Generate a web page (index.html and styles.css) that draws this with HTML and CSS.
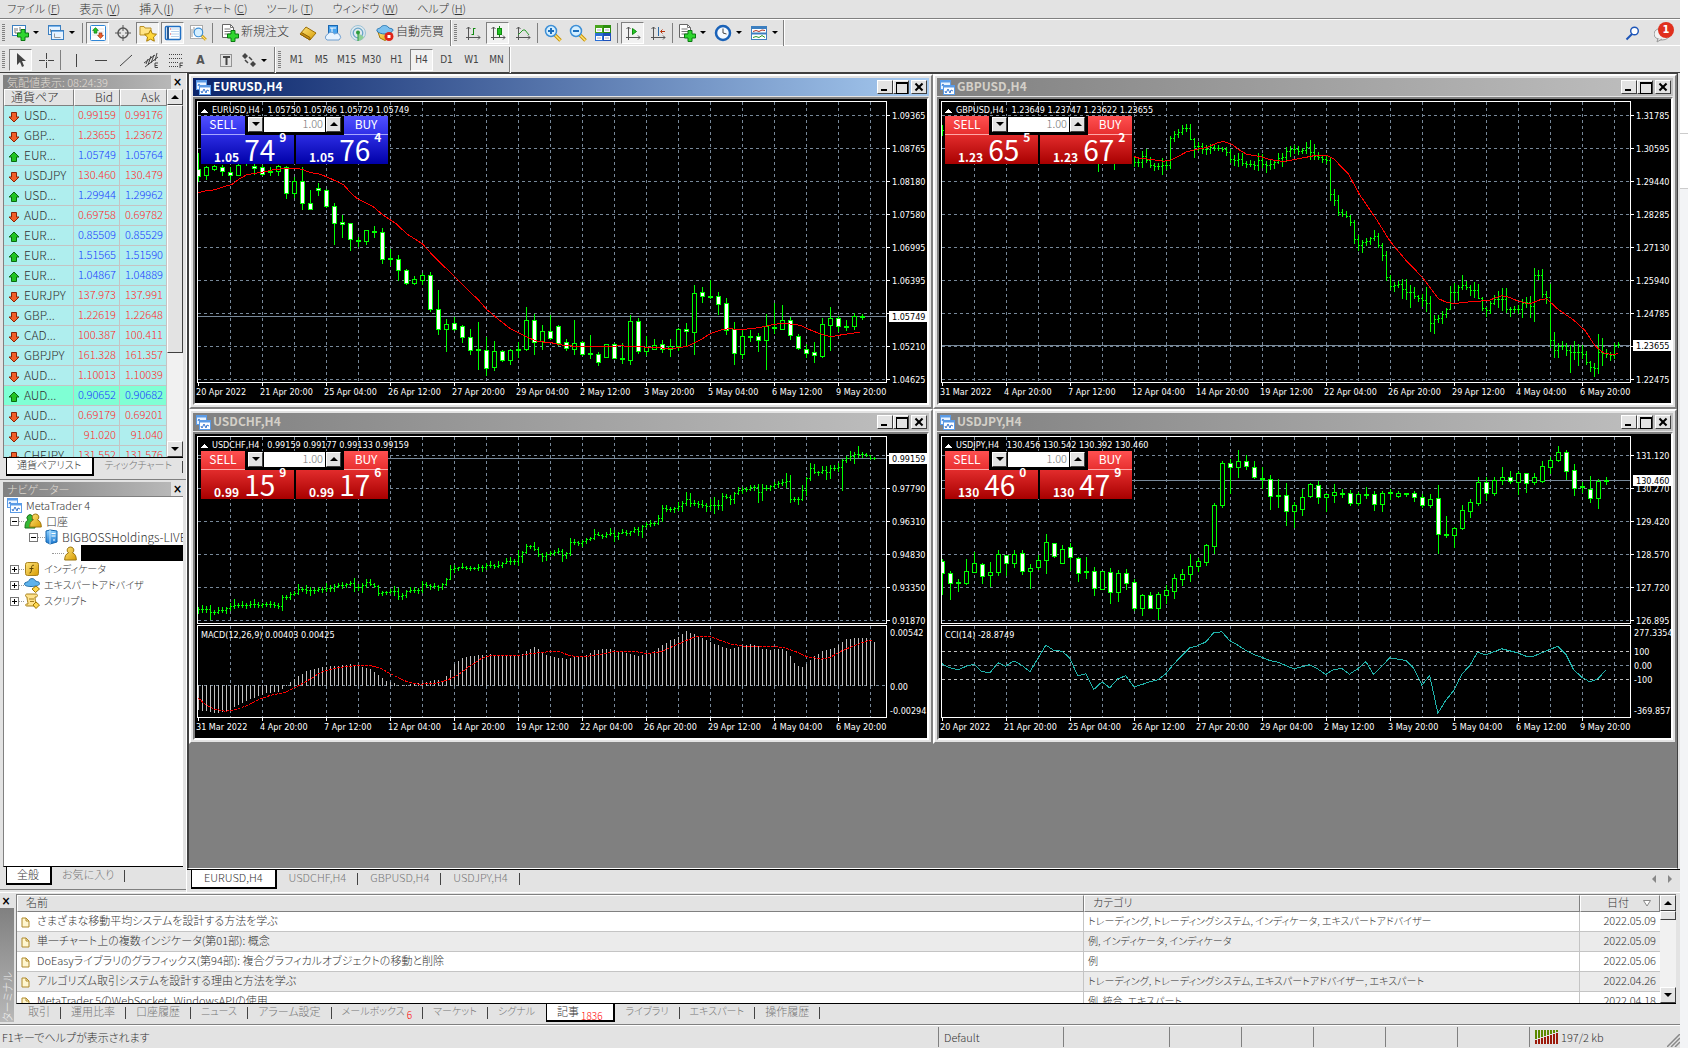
FILE: index.html
```html
<!DOCTYPE html>
<html lang="ja">
<head>
<meta charset="utf-8">
<title>MetaTrader 4</title>
<link rel="stylesheet" href="styles.css">
</head>
<body>
<svg class="defs" aria-hidden="true">
  <defs>
    <linearGradient id="gGold" x1="0" y1="0" x2="1" y2="1"><stop offset="0" stop-color="#ffe680"/><stop offset="1" stop-color="#d79b00"/></linearGradient>
    <linearGradient id="gBlue" x1="0" y1="0" x2="0" y2="1"><stop offset="0" stop-color="#8fd3ff"/><stop offset="1" stop-color="#1c78d0"/></linearGradient>
    <symbol id="up" viewBox="0 0 12 12"><path d="M6 1 11 6H8.500V10.500H3.500V6H1Z" fill="#22c322" stroke="#0a6a12"/></symbol>
    <symbol id="down" viewBox="0 0 12 12"><path d="M6 11 11 6H8.500V1.500H3.500V6H1Z" fill="#f0602a" stroke="#8c2409"/></symbol>
    <symbol id="plus" viewBox="0 0 12 12"><path d="M4 .5h4V4h3.500v4H8v3.500H4V8H.5V4H4Z" fill="#2fd62f" stroke="#0b7a12"/></symbol>
    <symbol id="mt" viewBox="0 0 15 15"><rect x=".5" y=".5" width="10" height="9" fill="#e8f3ff" stroke="#5a9be6"/><path d="M.5 1.500h10" stroke="#5a9be6" stroke-width="2"/><path d="M2 6l1-2 1 3 1-2 1 2" fill="none" stroke="#3a78cf"/><rect x="3.500" y="5.500" width="11" height="9" fill="#fff" stroke="#5a9be6"/><path d="M3.500 6.500h11" stroke="#5a9be6" stroke-width="2"/><path d="M5 11l1 2 2-4 2 4 1-3 2 1" fill="none" stroke="#3a78cf"/></symbol>
    <symbol id="doc" viewBox="0 0 9 11"><path d="M1 1h4l3 3v6H1Z" fill="#fff6cf" stroke="#b08a2c"/><path d="M5 1v3h3" fill="none" stroke="#b08a2c"/></symbol>
    <symbol id="person" viewBox="0 0 13 15"><path d="M6.500 1a3.200 3.200 0 0 1 2 5.800C11 8 12.300 10 12.300 14H.7C.7 10 2 8 4.500 6.800A3.200 3.200 0 0 1 6.500 1Z" fill="url(#gGold)" stroke="#9a7410"/></symbol>
    <symbol id="axes" viewBox="0 0 16 16"><path d="M3.500 15V2M1 12.500h14M1.500 4l2-2 2 2M13 10.500l2 2-2 2" fill="none" stroke="#555"/></symbol>
    <symbol id="lens" viewBox="0 0 18 18"><path d="M11 11l5.500 5.500" stroke="#c99400" stroke-width="3.500"/><path d="M11 11l5.500 5.500" stroke="#ffe27a" stroke-width="1.500"/><circle cx="7" cy="7" r="5.500" fill="#d5efff" stroke="#3d8fd6" stroke-width="1.500"/></symbol>
    <symbol id="page" viewBox="0 0 12 14"><path d="M.5.500h8l3 3v10H.5Z" fill="#fff" stroke="#666"/><path d="M8.500.500v3h3M2.500 5h6M2.500 7.500h7M2.500 10h7" fill="none" stroke="#777"/></symbol>
  </defs>
</svg>

<div class="desktop">
<div class="app">

<nav class="menu">
  <a href="#">ファイル (<u>F</u>)</a><a href="#" class="kanji">表示 (<u>V</u>)</a><a href="#" class="kanji">挿入(<u>I</u>)</a><a href="#">チャート (<u>C</u>)</a><a href="#">ツール (<u>T</u>)</a><a href="#">ウィンドウ (<u>W</u>)</a><a href="#">ヘルプ (<u>H</u>)</a>
</nav>

<div class="toolbar upper">
  <i class="grip"></i>
  <button class="tool drop" aria-label="新規チャート"><svg width="18" height="18"><rect x="1.500" y="1.500" width="13" height="10" fill="#fff" stroke="#3c7fc0"/><path d="M4 4v5h8M6 4v3M9 3v4" fill="none" stroke="#777"/><use href="#plus" x="6" y="5" width="12" height="12"/></svg></button>
  <button class="tool drop" aria-label="チャートの組表示"><svg width="18" height="18"><rect x="1.500" y="1.500" width="12" height="9" fill="#e7f3ff" stroke="#3c7fc0"/><path d="M2 2.500h11" stroke="#7ab4ec"/><path d="M3.500 5v3h6" fill="none" stroke="#999"/><rect x="4.500" y="6.500" width="12" height="9" fill="#e7f3ff" stroke="#3c7fc0"/><path d="M5 7.500h11" stroke="#7ab4ec"/><path d="M7.500 9.500v4h6" fill="none" stroke="#999"/></svg></button>
  <i class="sep"></i>
  <button class="tool on" aria-label="気配値表示"><svg width="18" height="18"><rect x="1.500" y="1.500" width="15" height="15" rx="1" fill="#fff" stroke="#2f86d6"/><path d="M3 5h12M3 8h12M3 11h12" stroke="#e4e4e4"/><use href="#up" x="3" y="3" width="7" height="7"/><use href="#down" x="8" y="8" width="7" height="7"/></svg></button>
  <button class="tool" aria-label="データウィンドウ"><svg width="18" height="18"><circle cx="9" cy="9" r="5" fill="none" stroke="#555" stroke-width="1.500"/><path d="M9 1v6M9 11v6M1 9h6M11 9h6" stroke="#555"/></svg></button>
  <button class="tool on" aria-label="ナビゲーター"><svg width="18" height="18"><path d="M1 11V2.500h4l1 1.500h6v7Z" fill="#ffe486" stroke="#bb9026"/><path d="M11.500 6l1.900 3.700 4.100.5-3 2.900.8 4.100-3.800-2-3.800 2 .8-4.100-3-2.900 4.100-.5Z" fill="#ffd83b" stroke="#a97b00"/></svg></button>
  <button class="tool on" aria-label="ターミナル"><svg width="18" height="18"><rect x="1.500" y="2.500" width="15" height="13" rx="1" fill="#fff" stroke="#1f6fc4" stroke-width="1.500"/><path d="M4 3v12" stroke="#28588f" stroke-width="2"/><path d="M7 5h8M7 7.500h8M7 10h8M7 12.500h8" stroke="#b9d3ee"/><path d="M6 5h1M6 10h1" stroke="#e33"/></svg></button>
  <button class="tool" aria-label="ストラテジーテスター"><svg width="18" height="18"><rect x="1.500" y="1.500" width="12" height="13" fill="#fff" stroke="#aaa"/><path d="M3 5v8M5 3v6" stroke="#999"/><use href="#lens" x="4" y="3" width="14" height="14"/></svg></button>
  <i class="sep"></i>
  <button class="tool wide" aria-label="新規注文"><svg width="18" height="18"><use href="#page" x="1" y="0" width="12" height="14"/><use href="#plus" x="6" y="6" width="12" height="12"/></svg><span>新規注文</span></button>
  <button class="tool" aria-label="MetaEditor"><svg width="18" height="18"><path d="M1 10 7 3l10 6-6 7Z" fill="url(#gGold)" stroke="#9a6d07"/><path d="M1 10l10 6v-2.500L2.500 8.500" fill="#c88e12" stroke="#8a6004"/></svg></button>
  <button class="tool" aria-label="VPS"><svg width="18" height="18"><rect x="4.500" y="1.500" width="9" height="9" fill="#49a4ef" stroke="#1a67b0"/><path d="M6 4h6M8 4v5" stroke="#fff"/><path d="M3 16a3 3 0 0 1 .5-5.500 4 4 0 0 1 7-.5A3.300 3.300 0 0 1 15 16Z" fill="#e9f4ff" stroke="#6f9fd0"/></svg></button>
  <button class="tool" aria-label="シグナル"><svg width="18" height="18"><circle cx="9" cy="9" r="7.500" fill="#dfe9ee" stroke="#9cc2d6"/><circle cx="9" cy="9" r="4.800" fill="none" stroke="#6aa5c8" stroke-width="1.300"/><path d="M9 9v8a8 8 0 0 0 6-4Z" fill="#8fcf97"/><path d="M9 9v8" stroke="#2d9c3b"/><circle cx="9" cy="8.500" r="2" fill="#2d9c3b"/></svg></button>
  <button class="tool wide" aria-label="自動売買"><svg width="18" height="18"><path d="M2 8h13l-2 6-4 2.500L4 14Z" fill="url(#gGold)" stroke="#a87a08"/><path d="M1 7C0 4 4 5 5 3s6-2 7 0 5 1 5 3-5 4-8 4-7-1-8-3Z" fill="#7cc1ef" stroke="#2a78b4"/><circle cx="13" cy="12.500" r="4.500" fill="#e02418"/><rect x="11.500" y="11" width="3" height="3" fill="#fff"/></svg><span>自動売買</span></button>
  <i class="edge"></i><i class="grip"></i>
  <button class="tool" aria-label="バーチャート"><svg width="16" height="16"><use href="#axes" width="16" height="16"/><path d="M8.500 3v7M8.500 3.500h2M6.500 9.500h2" stroke="#128a12"/></svg></button>
  <button class="tool on" aria-label="ローソク足"><svg width="16" height="16"><use href="#axes" width="16" height="16"/><path d="M9.500 1v11" stroke="#128a12"/><rect x="7.500" y="3.500" width="4" height="6" fill="#25c325" stroke="#128a12"/></svg></button>
  <button class="tool" aria-label="ラインチャート"><svg width="16" height="16"><use href="#axes" width="16" height="16"/><path d="M3 10l5-5 2 0 4 5" fill="none" stroke="#2a9a2a"/></svg></button>
  <i class="sep"></i>
  <button class="tool" aria-label="拡大"><svg width="18" height="18"><use href="#lens" width="18" height="18"/><path d="M4 7h6M7 4v6" stroke="#1d6fbd" stroke-width="2"/></svg></button>
  <button class="tool" aria-label="縮小"><svg width="18" height="18"><use href="#lens" width="18" height="18"/><path d="M4 7h6" stroke="#1d6fbd" stroke-width="2"/></svg></button>
  <button class="tool" aria-label="整列"><svg width="18" height="18"><rect x="1" y="1" width="8" height="8" fill="#47a51c"/><rect x="9" y="1" width="8" height="8" fill="#2d8f10"/><rect x="1" y="9" width="8" height="8" fill="#2a6fd6"/><rect x="9" y="9" width="8" height="8" fill="#1d50b8"/><path d="M2 4h6v4H2ZM10 4h6v4h-6ZM2 12h6v4H2ZM10 12h6v4h-6Z" fill="#fff"/><path d="M3 6h4M11 6h4M3 14h4M11 14h4" stroke="#aab"/></svg></button>
  <i class="sep"></i>
  <button class="tool on" aria-label="自動スクロール"><svg width="16" height="16"><use href="#axes" width="16" height="16"/><path d="M7.500 3.500v6l4-3Z" fill="#2c2" stroke="#128a12"/></svg></button>
  <button class="tool" aria-label="チャートシフト"><svg width="16" height="16"><use href="#axes" width="16" height="16"/><path d="M8.500 2v9" stroke="#2a6aa8"/><path d="M15 6.500h-4M12.500 4.500l-2 2 2 2" fill="none" stroke="#b8330c"/></svg></button>
  <i class="sep"></i>
  <button class="tool drop" aria-label="インディケータ"><svg width="18" height="18"><use href="#page" x="1" y="0" width="12" height="14"/><use href="#plus" x="6" y="6" width="12" height="12"/></svg></button>
  <button class="tool drop" aria-label="時間足"><svg width="18" height="18"><circle cx="9" cy="9" r="7" fill="#f4f9ff" stroke="#1a62b8" stroke-width="2.500"/><path d="M9 4.500V9l3.500 1" fill="none" stroke="#444"/></svg></button>
  <button class="tool drop" aria-label="テンプレート"><svg width="18" height="18"><rect x="1.500" y="2.500" width="15" height="13" fill="#fff" stroke="#3c7fc0"/><path d="M2 4h14M2 9.500h14" stroke="#3c7fc0" stroke-width="2"/><path d="M3 7.500l3-1 3 1 3-1.500 3 .5" fill="none" stroke="#b03020"/><path d="M3 13.500l3-1 3 1 3-2 3 2" fill="none" stroke="#2a9a2a"/></svg></button>
  <i class="edge"></i>
  <div class="corner">
    <button class="tool" aria-label="検索"><svg width="16" height="16"><path d="M1.500 14.500 7 9" stroke="#1d55b8" stroke-width="2"/><circle cx="9.500" cy="6" r="3.800" fill="#fff" stroke="#1d55b8" stroke-width="1.400"/></svg></button>
    <button class="tool bell" aria-label="通知"><svg width="20" height="20"><ellipse cx="8" cy="11" rx="8" ry="6" fill="#f2f2f2" stroke="#999"/><path d="M4 15l-1 4 5-3" fill="#ddd" stroke="#999"/></svg><b>1</b></button>
  </div>
</div>

<div class="toolbar lower">
  <i class="grip"></i>
  <button class="tool on" aria-label="カーソル"><svg width="16" height="16"><path d="M4 1v12l3-3 2 5 2-1-2-5h4Z" fill="#444"/></svg></button>
  <button class="tool" aria-label="クロスヘア"><svg width="16" height="16"><path d="M8.500 1v6M8.500 10v6M1 8.500h6M10 8.500h6M8 8.500h1" stroke="#444"/></svg></button>
  <i class="sep"></i>
  <button class="tool" aria-label="垂直線"><svg width="16" height="16"><path d="M8.500 2v13" stroke="#444"/></svg></button>
  <button class="tool" aria-label="水平線"><svg width="16" height="16"><path d="M2 8.500h12" stroke="#444"/></svg></button>
  <button class="tool" aria-label="トレンドライン"><svg width="16" height="16"><path d="M2 14 14 3" stroke="#444"/></svg></button>
  <button class="tool" aria-label="チャネル"><svg width="16" height="16"><path d="M1 11 12 3M2 15 15 5M5 13 8 4M8 11 11 3M3 12 5 7M12 9 14 1" stroke="#444"/><path d="M15 11h-3v4.500h3M12 13.500h2.500" fill="none" stroke="#444"/></svg></button>
  <button class="tool" aria-label="フィボナッチ"><svg width="16" height="16"><path d="M1 2.500h14M1 6.500h14M1 10.500h10M1 14.500h10" stroke="#444" stroke-dasharray="1 1"/><path d="M15 11h-3v5M12 13.500h2.500" fill="none" stroke="#444"/></svg></button>
  <button class="tool glyph">A</button>
  <button class="tool" aria-label="ラベル"><svg width="16" height="16"><rect x="2.500" y="2.500" width="11" height="12" fill="none" stroke="#444" stroke-dasharray="1 1"/><path d="M5 5h7M8.500 5v8" stroke="#444" stroke-width="2"/></svg></button>
  <button class="tool drop" aria-label="矢印"><svg width="16" height="16"><path d="M1 4l3-3 3 3-3 3ZM9 12l3-3 3 3-3 3Z" fill="#444"/><path d="M4 8l3 3M8 5l3 3" stroke="#444" stroke-width="1.500"/></svg></button>
  <i class="edge"></i><i class="grip"></i>
  <button class="tool period">M1</button><button class="tool period">M5</button><button class="tool period">M15</button><button class="tool period">M30</button><button class="tool period">H1</button><button class="tool period on">H4</button><button class="tool period">D1</button><button class="tool period">W1</button><button class="tool period">MN</button>
  <i class="edge"></i>
</div>

<main class="work">
  <aside class="side">
    <section class="dock watch">
      <header class="caption"><h2>気配値表示: 08:24:39</h2><button aria-label="閉じる">×</button></header>
      <div class="scrolled">
        <div class="clip">
        <table class="quotes">
          <colgroup><col class="c-sym"><col class="c-bid"><col></colgroup>
          <thead><tr><th>通貨ペア</th><th>Bid</th><th>Ask</th></tr></thead>
          <tbody>
            <tr class="dn"><td><svg><use href="#down"/></svg>USD...</td><td>0.99159</td><td>0.99176</td></tr>
            <tr class="dn"><td><svg><use href="#down"/></svg>GBP...</td><td>1.23655</td><td>1.23672</td></tr>
            <tr class="up"><td><svg><use href="#up"/></svg>EUR...</td><td>1.05749</td><td>1.05764</td></tr>
            <tr class="dn"><td><svg><use href="#down"/></svg>USDJPY</td><td>130.460</td><td>130.479</td></tr>
            <tr class="up"><td><svg><use href="#up"/></svg>USD...</td><td>1.29944</td><td>1.29962</td></tr>
            <tr class="dn"><td><svg><use href="#down"/></svg>AUD...</td><td>0.69758</td><td>0.69782</td></tr>
            <tr class="up"><td><svg><use href="#up"/></svg>EUR...</td><td>0.85509</td><td>0.85529</td></tr>
            <tr class="up"><td><svg><use href="#up"/></svg>EUR...</td><td>1.51565</td><td>1.51590</td></tr>
            <tr class="up"><td><svg><use href="#up"/></svg>EUR...</td><td>1.04867</td><td>1.04889</td></tr>
            <tr class="dn"><td><svg><use href="#down"/></svg>EURJPY</td><td>137.973</td><td>137.991</td></tr>
            <tr class="dn"><td><svg><use href="#down"/></svg>GBP...</td><td>1.22619</td><td>1.22648</td></tr>
            <tr class="dn"><td><svg><use href="#down"/></svg>CAD...</td><td>100.387</td><td>100.411</td></tr>
            <tr class="dn"><td><svg><use href="#down"/></svg>GBPJPY</td><td>161.328</td><td>161.357</td></tr>
            <tr class="dn"><td><svg><use href="#down"/></svg>AUD...</td><td>1.10013</td><td>1.10039</td></tr>
            <tr class="up sel"><td><svg><use href="#up"/></svg>AUD...</td><td>0.90652</td><td>0.90682</td></tr>
            <tr class="dn"><td><svg><use href="#down"/></svg>AUD...</td><td>0.69179</td><td>0.69201</td></tr>
            <tr class="dn"><td><svg><use href="#down"/></svg>AUD...</td><td>91.020</td><td>91.040</td></tr>
            <tr class="dn"><td><svg><use href="#down"/></svg>CHFJPY</td><td>131.552</td><td>131.576</td></tr>
          </tbody>
        </table>
        </div>
        <div class="bar"><button class="arr u" aria-label="上へ"></button><i class="thumb long"></i><i class="track"></i><button class="arr d" aria-label="下へ"></button></div>
      </div>
      <div class="tabs"><button class="tab kana active">通貨ペアリスト</button><button class="tab kana">ティックチャート</button></div>
    </section>

    <section class="dock navi">
      <header class="caption"><h2>ナビゲーター</h2><button aria-label="閉じる">×</button></header>
      <ul class="tree">
        <li class="root"><svg width="15" height="15"><use href="#mt"/></svg>MetaTrader 4</li>
        <li><i class="box minus"></i><i class="dots"></i><svg width="18" height="16"><path d="M1 15c0-5 1-7 3-8a3 3 0 1 1 4 0c2 1 3 3 3 8Z" fill="#35b935" stroke="#197019"/><use href="#person" x="5" y="0" width="13" height="15"/></svg>口座</li>
        <li class="l2"><i class="box minus"></i><i class="dots"></i><svg width="13" height="16"><path d="M1 2l4-1 7 1v11l-7 2-4-2Z" fill="url(#gBlue)" stroke="#1265ae"/><path d="M5 1v14" stroke="#bfe2ff"/><path d="M6.500 4.500h4M6.500 7h4M8 11h2" stroke="#fff"/></svg>BIGBOSSHoldings-LIVE</li>
        <li class="l3"><i class="dots"></i><svg width="13" height="15"><use href="#person"/></svg><span class="mask"></span></li>
        <li class="kana"><i class="box plus"></i><i class="dots"></i><svg width="16" height="15"><rect x="1.500" y=".5" width="13" height="13" rx="2" fill="url(#gGold)" stroke="#a6801c"/><path d="M10 3.500c-2-1-2.500 1-2.500 3S7 11.500 5.500 11M5.500 6.500h4" fill="none" stroke="#5a4200"/></svg>インディケータ</li>
        <li class="kana"><i class="box plus"></i><i class="dots"></i><svg width="16" height="16"><path d="M.5 7C.5 4.500 4 6 5 3.500 5.500 1 10.500 1 11 3.500 12 5 15.500 4 15.500 6.500S10 9.500 7 9.500.5 9 .5 7Z" fill="#5fb2ea" stroke="#256fa8"/><path d="M8 12l4-3 3.500 3-4 3.500Z" fill="#ffd84f" stroke="#9c7400"/></svg>エキスパートアドバイザ</li>
        <li class="kana"><i class="box plus"></i><i class="dots"></i><svg width="16" height="16"><path d="M3 1h9c2 0 2 3 0 3h-1c0 3 1 5 1 7l1 2H3c-2 0-2-2 0-2h1c0-2-1-4-1-7-2 0-2-3 0-3Z" fill="#ffe28a" stroke="#a6801c"/><path d="M5 6h5M6 8.500h4" stroke="#a6801c"/><path d="M9 12l3-3 3.500 3-3.500 3.500Z" fill="#ffd84f" stroke="#9c7400"/></svg>スクリプト</li>
      </ul>
      <div class="tabs"><button class="tab active">全般</button><button class="tab">お気に入り</button></div>
    </section>
  </aside>

  <section class="stage">
    <div class="mdi">
      <article class="win focus">
        <header class="titlebar"><svg width="15" height="15"><use href="#mt"/></svg><h3>EURUSD,H4</h3><span class="ctl"><button class="min" aria-label="最小化"></button><button class="max" aria-label="最大化"></button><button class="cls" aria-label="閉じる"></button></span></header>
        <div class="chart"><svg class="plot" id="eurusd"></svg>
          <div class="trade blue"><div class="tr-top"><button>SELL</button><span class="lot"><button class="arr d" aria-label="減らす"></button><input value="1.00" aria-label="ロット"><button class="arr u" aria-label="増やす"></button></span><button>BUY</button></div>
          <div class="tr-px"><span>1.05<b>74</b><sup>9</sup></span><span>1.05<b>76</b><sup>4</sup></span></div></div>
        </div>
      </article>
      <article class="win">
        <header class="titlebar"><svg width="15" height="15"><use href="#mt"/></svg><h3>GBPUSD,H4</h3><span class="ctl"><button class="min" aria-label="最小化"></button><button class="max" aria-label="最大化"></button><button class="cls" aria-label="閉じる"></button></span></header>
        <div class="chart"><svg class="plot" id="gbpusd"></svg>
          <div class="trade red"><div class="tr-top"><button>SELL</button><span class="lot"><button class="arr d" aria-label="減らす"></button><input value="1.00" aria-label="ロット"><button class="arr u" aria-label="増やす"></button></span><button>BUY</button></div>
          <div class="tr-px"><span>1.23<b>65</b><sup>5</sup></span><span>1.23<b>67</b><sup>2</sup></span></div></div>
        </div>
      </article>
      <article class="win">
        <header class="titlebar"><svg width="15" height="15"><use href="#mt"/></svg><h3>USDCHF,H4</h3><span class="ctl"><button class="min" aria-label="最小化"></button><button class="max" aria-label="最大化"></button><button class="cls" aria-label="閉じる"></button></span></header>
        <div class="chart"><svg class="plot" id="usdchf"></svg>
          <div class="trade red"><div class="tr-top"><button>SELL</button><span class="lot"><button class="arr d" aria-label="減らす"></button><input value="1.00" aria-label="ロット"><button class="arr u" aria-label="増やす"></button></span><button>BUY</button></div>
          <div class="tr-px"><span>0.99<b>15</b><sup>9</sup></span><span>0.99<b>17</b><sup>6</sup></span></div></div>
        </div>
      </article>
      <article class="win">
        <header class="titlebar"><svg width="15" height="15"><use href="#mt"/></svg><h3>USDJPY,H4</h3><span class="ctl"><button class="min" aria-label="最小化"></button><button class="max" aria-label="最大化"></button><button class="cls" aria-label="閉じる"></button></span></header>
        <div class="chart"><svg class="plot" id="usdjpy"></svg>
          <div class="trade red"><div class="tr-top"><button>SELL</button><span class="lot"><button class="arr d" aria-label="減らす"></button><input value="1.00" aria-label="ロット"><button class="arr u" aria-label="増やす"></button></span><button>BUY</button></div>
          <div class="tr-px"><span>130<b>46</b><sup>0</sup></span><span>130<b>47</b><sup>9</sup></span></div></div>
        </div>
      </article>
    </div>
    <div class="tabs charts"><button class="tab active">EURUSD,H4</button><button class="tab">USDCHF,H4</button><button class="tab">GBPUSD,H4</button><button class="tab">USDJPY,H4</button><span class="nudge"><i class="l"></i><i class="r"></i></span></div>
  </section>
</main>

<section class="terminal">
  <div class="spine"><button aria-label="閉じる">×</button><h2>ターミナル</h2></div>
  <div class="term-body">
    <div class="scrolled">
      <div class="clip">
      <table class="articles">
        <colgroup><col><col class="c-cat"><col class="c-date"></colgroup>
        <thead><tr><th>名前</th><th>カテゴリ</th><th>日付<svg class="sort" width="8" height="8"><path d="M.5 1.500h7L4 7Z" fill="#fff" stroke="#888"/></svg></th></tr></thead>
        <tbody>
          <tr><td><svg><use href="#doc"/></svg>さまざまな移動平均システムを設計する方法を学ぶ</td><td>トレーディング, トレーディングシステム, インディケータ, エキスパートアドバイザー</td><td>2022.05.09</td></tr>
          <tr><td><svg><use href="#doc"/></svg>単一チャート上の複数インジケータ(第01部): 概念</td><td>例, インディケータ, インディケータ</td><td>2022.05.09</td></tr>
          <tr><td><svg><use href="#doc"/></svg>DoEasyライブラリのグラフィックス(第94部): 複合グラフィカルオブジェクトの移動と削除</td><td>例</td><td>2022.05.06</td></tr>
          <tr><td><svg><use href="#doc"/></svg>アルゴリズム取引システムを設計する理由と方法を学ぶ</td><td>トレーディング, トレーディングシステム, エキスパートアドバイザー, エキスパート</td><td>2022.04.26</td></tr>
          <tr><td><svg><use href="#doc"/></svg>MetaTrader 5のWebSocket_WindowsAPIの使用</td><td>例, 統合, エキスパート</td><td>2022.04.18</td></tr>
        </tbody>
      </table>
      </div>
      <div class="bar"><button class="arr u" aria-label="上へ"></button><i class="thumb"></i><i class="track"></i><button class="arr d" aria-label="下へ"></button></div>
    </div>
    <div class="tabs"><button class="tab">取引</button><button class="tab">運用比率</button><button class="tab">口座履歴</button><button class="tab kana">ニュース</button><button class="tab">アラーム設定</button><button class="tab kana">メールボックス<sub>6</sub></button><button class="tab kana">マーケット</button><button class="tab kana last">シグナル</button><button class="tab active">記事<sub>1836</sub></button><button class="tab kana">ライブラリ</button><button class="tab kana">エキスパート</button><button class="tab">操作履歴</button></div>
  </div>
</section>

<footer class="status">
  <span class="help">F1キーでヘルプが表示されます</span><span class="s125">Default</span><span class="s106"></span><span class="s72"></span><span class="s72"></span><span class="s72"></span><span class="s72"></span><span class="s72"></span>
  <span class="net"><svg width="24" height="14"><path d="M1 0v9M4 0v8M7 0v7M10 0v6M13 0v5M16 0v4M19 0v3M22 0v2" stroke="#5c8a00" stroke-width="2"/><path d="M1 10v4M4 9v5M7 8v6M10 7v7M13 6v8M16 5v9M19 4v10M22 3v11" stroke="#9c1a0a" stroke-width="2"/></svg>197/2 kb<svg class="size" width="13" height="13"><path d="M0 13 13 0M4 13 13 4M8 13l5-5" stroke="#888" stroke-width="1.500"/></svg></span>
</footer>
</div>
<div class="behind"><i></i><i></i></div>
</div>
<script src="charts.js"></script>
</body>
</html>
```

FILE: styles.css
```css
* { box-sizing: border-box; }
:root {
  --face: #e3e3e3;
  --mid: #808080;
  --dark: #404040;
  --ui: "Noto Sans CJK JP", sans-serif;
  --small: "DejaVu Sans Condensed", "Noto Sans", sans-serif;
}
body { margin: 0; font: 300 11px/16px var(--ui); font-feature-settings: "palt"; color: #333; background: #f3f4f6; }
button, input { font: inherit; color: inherit; font-feature-settings: inherit; padding: 0; margin: 0; border: 0; border-radius: 0; background: none; }
h2, h3, ul { margin: 0; padding: 0; font: inherit; list-style: none; }
i { display: block; flex: none; }
svg { display: block; flex: none; }
.defs { position: absolute; width: 0; height: 0; }
.desktop { display: flex; min-height: 100vh; }
.app { flex: 1; min-width: 0; display: flex; flex-direction: column; background: var(--face); }
.behind { width: 8px; background: #f3f4f6; }
.behind i { height: 134px; background: #fff; border-bottom: 1px solid #ccc; }
.behind i + i { height: 55px; }

/* menu and toolbars */
.menu { display: flex; gap: 19px; height: 19px; padding-left: 7px; border-bottom: 1px solid var(--mid); }
.menu a { color: #333; text-decoration: none; line-height: 17px; white-space: nowrap; }
.menu .kanji { font-size: 12px; }
.toolbar { display: flex; align-items: center; height: 27px; border-bottom: 1px solid #fff; background: var(--face); }
.toolbar.upper { border-top: 1px solid #fff; }
.toolbar.lower { padding-top: 2px; border-bottom: 1px solid var(--dark); }
.grip { width: 3px; height: 18px; margin: 0 3px 0 2px; background: repeating-linear-gradient(#808080 0 1px, #e3e3e3 1px 2px); }
.sep { width: 1px; height: 20px; margin: 0 2px; background: var(--mid); }
.edge { width: 2px; height: 26px; border-left: 1px solid var(--mid); background: #fff; }
.tool { display: flex; flex: none; align-items: center; justify-content: center; width: 23px; height: 22px; margin: 0 1px; border: 1px solid transparent; }
.tool.on { border-color: var(--mid) #fff #fff var(--mid); background: #f1f1f1; }
.tool.drop { width: 34px; justify-content: flex-start; gap: 4px; padding-left: 1px; }
.tool.drop::after { content: ""; border: 3px solid transparent; border-top: 3px solid #000; border-bottom: 0; }
.tool.wide { width: auto; gap: 2px; padding: 0 4px; font-size: 12px; line-height: 16px; }
.tool.wide span { padding-bottom: 3px; }
.tool.period { font: 10px/14px var(--small); color: #444; }
.tool.glyph { font: bold 12px/14px var(--small); color: #555; }
.corner { display: flex; gap: 6px; margin-left: auto; padding-right: 4px; }
.bell { position: relative; }
.bell b { position: absolute; top: -1px; right: 0; width: 16px; height: 16px; border-radius: 8px; background: #e0301e; color: #fff; font: bold 11px/16px var(--small); text-align: center; }

/* docks */
.work { flex: 1; display: flex; min-height: 0; }
.side { flex: none; width: 187px; display: flex; flex-direction: column; border-right: 1px solid #fff; }
.dock { display: flex; flex-direction: column; padding: 2px 3px 0; }
.watch { height: 407px; border-bottom: 1px solid var(--mid); }
.navi { flex: 1; border-bottom: 1px solid var(--mid); margin-bottom: 2px; }
.caption { display: flex; height: 14px; }
.caption h2 { flex: 1; padding-left: 4px; color: #e0dcd4; line-height: 14px; background: linear-gradient(90deg, #808080, #b8b8b8); }
.caption button, .spine button { width: 12px; font: bold 12px/12px var(--small); color: #000; }
.caption button { padding-left: 1px; }
.scrolled { display: flex; flex: none; }
.clip { flex: 1; min-width: 0; overflow: hidden; }
.watch .scrolled { height: 369px; border-left: 1px solid var(--mid); border-bottom: 1px solid #000; }
.bar { flex: none; width: 16px; display: flex; flex-direction: column; }
.arr { flex: none; display: flex; align-items: center; justify-content: center; width: 16px; height: 16px; background: var(--face); border: 1px solid; border-color: #fff var(--dark) var(--dark) #fff; }
.arr::after { content: ""; border: 4px solid transparent; }
.arr.u::after { border-top: 0; border-bottom-color: #000; }
.arr.d::after { border-bottom: 0; border-top-color: #000; }
.thumb { height: 9px; background: var(--face); border: 1px solid; border-color: #fff var(--dark) var(--dark) #fff; }
.thumb.long { height: 248px; }
.track { flex: 1; background: #f1f1f1; }

table { width: 100%; border-collapse: separate; border-spacing: 0; table-layout: fixed; }
th { height: 17px; padding: 0; font-weight: inherit; line-height: 13px; vertical-align: top; background: var(--face); border: 1px solid; border-color: #fff var(--mid) var(--mid) #fff; }
td { height: 20px; padding: 0; line-height: 17px; vertical-align: top; white-space: nowrap; overflow: hidden; border-bottom: 1px solid #c4c4c4; border-right: 1px solid #c4c4c4; }
td svg { display: inline-block; vertical-align: middle; }
.c-sym { width: 70px; }
.c-bid { width: 46px; }
.quotes th { text-align: right; padding-right: 6px; font-size: 12px; }
.quotes th:first-child { text-align: left; padding-left: 6px; }
.quotes td { background: #afeeee; text-align: right; padding-right: 3px; }
.quotes td:first-child { text-align: left; padding-left: 4px; color: #333; font-size: 12px; }
.quotes td svg { width: 12px; height: 12px; margin-right: 4px; }
.quotes .sel td { background: #7fffd4; }
.dn { color: #ff2a2a; }
.up { color: #1a3cff; }

.tabs { display: flex; height: 18px; }
.tab { position: relative; flex: none; height: 16px; padding: 0 11px 2px 10px; color: #777; line-height: 14px; white-space: nowrap; }
.tab::after { content: ""; position: absolute; right: 0; top: 3px; width: 1px; height: 12px; background: #444; }
.tab.active { background: #fff; color: #333; border: 2px solid #000; border-width: 0 2px 2px 1px; height: 18px; margin-left: 3px; }
.tab.active::after, .tab.last::after { display: none; }
.tab sub { color: #f00; font-size: 10px; line-height: 9px; margin-left: 2px; vertical-align: -4px; }
.kana, .tree li.kana { font-size: 10px; }

.tree { flex: 1; background: #fff; border-left: 1px solid var(--mid); border-top: 1px solid var(--mid); border-bottom: 1px solid #000; position: relative; overflow: hidden; }
.tree li { display: flex; align-items: center; height: 16px; padding-left: 6px; white-space: nowrap; line-height: 14px; }
.tree li.root { padding-left: 3px; }
.tree li.l2 { padding-left: 25px; font-size: 12px; }
.tree li.l3 { padding-left: 48px; }
.tree svg { margin-right: 4px; }
.box { width: 9px; height: 9px; border: 1px solid #777; background: linear-gradient(#000, #000) center / 5px 1px no-repeat; }
.box.plus { background: linear-gradient(#000, #000) center / 5px 1px no-repeat, linear-gradient(#000, #000) center / 1px 5px no-repeat; }
.dots { width: 5px; border-top: 1px dotted #999; }
.l2 .dots { width: 7px; }
.l3 .dots { width: 12px; }
.mask { width: 105px; height: 16px; background: #000; }
.navi .tabs { height: 22px; }

/* chart windows */
.stage { flex: 1; min-width: 0; display: flex; flex-direction: column; }
.mdi { flex: 1; display: grid; grid-template-columns: 1fr 1fr; align-content: start; background: var(--mid); border: 0 solid var(--dark); border-width: 1px 1px 0 2px; margin-right: 2px; border-bottom: 1px solid #fff; }
.win { min-width: 0; padding: 2px; background: var(--face); border: 2px solid; border-color: #fff var(--mid) var(--mid) #fff; }
.titlebar { display: flex; align-items: center; height: 18px; margin-bottom: 1px; padding: 0 2px 0 3px; background: linear-gradient(90deg, #808080, #c0c0c0); color: #d4d0c8; }
.focus .titlebar { background: linear-gradient(90deg, #0a246a, #a6caf0); color: #fff; }
.titlebar h3 { flex: 1; padding: 0 0 2px 2px; font: bold 12px/14px var(--ui); }
.ctl { display: flex; }
.ctl button { position: relative; width: 16px; height: 14px; background: var(--face); border: 1px solid; border-color: #fff var(--dark) var(--dark) #fff; }
.ctl .cls { margin-left: 2px; }
.ctl .min::after { content: ""; position: absolute; left: 3px; bottom: 2px; width: 6px; height: 2px; background: #000; }
.ctl .max::after { content: ""; position: absolute; left: 2px; top: 1px; width: 10px; height: 9px; border: 1px solid #000; border-top-width: 2px; }
.ctl .cls::before, .ctl .cls::after { content: ""; position: absolute; left: 2px; top: 5px; width: 10px; height: 2px; background: #000; transform: rotate(45deg); }
.ctl .cls::after { transform: rotate(-45deg); }
.chart { position: relative; background: #000; border: 2px solid; border-color: var(--mid) #fff #fff var(--mid); }
.plot { width: 100%; height: 304px; font: 9px var(--small); fill: #fff; }

.trade { position: absolute; left: 6px; top: 17px; width: 187px; color: #fff; background: #000; }
.tr-top { display: flex; justify-content: space-between; height: 19px; }
.tr-top > button { width: 44px; padding-bottom: 3px; color: #fff; font-weight: 400; font-size: 12px; line-height: 14px; border-bottom: 1px solid rgba(255,255,255,.5); }
.lot { display: flex; gap: 1px; width: 93px; height: 15px; margin-top: 1px; }
.lot input { flex: 1; min-width: 0; background: #fff; color: #777; text-align: right; padding: 0 2px 3px 0; }
.lot .arr { width: 15px; height: 15px; padding-bottom: 1px; }
.tr-px { display: grid; grid-template-columns: 93px 92px; gap: 2px; height: 29px; }
.tr-px span { display: flex; align-items: flex-end; font-weight: 700; font-size: 12px; line-height: 14px; padding-left: 13px; }
.tr-px b { font-weight: 400; font-size: 28px; line-height: 25px; margin: 0 4px 2px 5px; }
.tr-px sup { align-self: flex-start; font-size: 12px; line-height: 9px; margin-top: -3px; }
.blue .tr-top > button { background: linear-gradient(#5050ff, #3030e8); }
.blue .tr-px span { background: linear-gradient(#2c2ce2, #0000a8); }
.red .tr-top > button { background: linear-gradient(#ff5050, #e83030); }
.red .tr-px span { background: linear-gradient(#e22c2c, #a80000); }

.tabs.charts { height: 23px; border-top: 1px solid #000; }
.tabs.charts .tab { height: 18px; padding: 0 12px 4px; }
.tabs.charts .tab.active { height: 19px; margin-left: 4px; padding-bottom: 3px; }
.nudge { display: flex; gap: 12px; align-items: center; margin-left: auto; padding: 0 8px 4px 0; }
.nudge i { border: 4px solid transparent; }
.nudge .l { border-left: 0; border-right-color: #888; }
.nudge .r { border-right: 0; border-left-color: #888; }

/* terminal */
.terminal { display: flex; height: 133px; padding: 1px 4px 0 0; border-top: 1px solid #fff; border-bottom: 1px solid var(--mid); }
.spine { width: 16px; display: flex; flex-direction: column; align-items: flex-start; }
.spine h2 { flex: 1; width: 14px; writing-mode: vertical-rl; text-orientation: sideways; transform: rotate(180deg); color: #eee; line-height: 14px; background: linear-gradient(#b8b8b8, #808080); margin-bottom: 2px; }
.spine button { height: 14px; }
.term-body { flex: 1; min-width: 0; }
.term-body .scrolled { height: 110px; border-top: 1px solid var(--mid); border-left: 1px solid var(--mid); border-bottom: 1px solid #000; }
.c-cat { width: 496px; }
.c-date { width: 80px; }
.articles th { text-align: left; padding-left: 8px; }
.articles th:last-child { text-align: right; padding-right: 8px; }
.articles td { padding-left: 4px; }
.articles td:nth-child(2) { font-size: 10px; }
.articles td:last-child { text-align: right; padding-right: 4px; border-right: 0; }
.articles td svg { width: 9px; height: 11px; margin-right: 7px; }
.articles tbody tr { background: #fff; }
.articles tbody tr:nth-child(even) { background: #ebebeb; }
.sort { display: inline-block; margin-left: 14px; }
.term-body .tabs { padding-left: 2px; }
.term-body .tab { padding-bottom: 3px; }
.term-body .tab.active { margin-left: 0; padding-bottom: 2px; }

/* status bar */
.status { display: flex; align-items: center; height: 23px; border-top: 1px solid #fff; }
.status span { height: 20px; line-height: 21px; padding-left: 5px; border-left: 1px solid var(--mid); }
.status .help { flex: 1; padding-left: 2px; border-left: 0; }
.s125 { width: 125px; }
.s106 { width: 106px; }
.s72 { width: 72px; }
.status .net { display: flex; align-items: center; gap: 2px; width: 151px; }
.size { align-self: flex-end; margin-left: auto; }
```

FILE: charts.js
```js
// Samples are held in fine chart units, three to a pixel vertically.
// Candle: [high, bodyTop, bodyBottom, low, filled]; bar: [high, low].
const eur = [[250,298,318,332,1],[288,290,316,328,0],[286,288,296,300,0],[286,290,304,314,1],[290,306,314,328,1],[280,284,314,314,0],[270,272,280,284,0],[280,288,293,312,1],[284,292,311,314,1],[292,303,307,314,0],[286,289,304,314,0],[288,290,368,384,1],[320,334,368,382,0],[290,334,400,416,1],[360,400,416,416,1],[338,355,360,374,1],[358,361,409,412,1],[400,408,458,522,1],[434,457,462,500,1],[458,460,508,540,1],[500,509,512,528,0],[480,481,514,522,0],[468,482,485,500,0],[474,487,566,578,1],[536,565,568,585,0],[556,568,601,630,1],[596,600,638,641,1],[618,628,638,642,0],[608,615,629,643,0],[605,615,718,724,1],[660,718,776,792,1],[746,763,776,843,0],[742,760,776,780,1],[764,767,802,816,1],[777,801,839,852,1],[755,838,841,897,0],[802,841,893,914,1],[812,843,890,900,0],[840,843,869,872,1],[836,841,869,882,0],[815,838,841,860,0],[710,751,838,840,0],[732,750,815,852,1],[765,784,814,836,0],[735,784,803,808,1],[766,767,818,824,1],[808,817,835,840,1],[750,819,836,852,0],[812,817,851,856,1],[795,849,852,864,0],[845,851,875,884,1],[822,823,860,862,0],[820,823,863,864,1],[818,863,866,879,0],[735,754,869,881,0],[744,754,842,848,1],[797,832,842,856,0],[808,826,836,838,0],[810,823,838,845,1],[808,829,838,858,0],[774,777,829,840,0],[760,777,783,828,1],[645,670,785,852,0],[650,667,677,696,1],[630,677,680,684,0],[666,679,701,732,1],[684,700,779,792,1],[756,777,848,881,1],[780,799,851,864,0],[780,799,802,812,0],[788,799,811,842,1],[732,769,811,896,0],[700,772,775,788,0],[705,751,776,778,0],[742,751,794,808,1],[792,798,835,838,1],[822,837,848,862,1],[815,847,854,876,1],[744,763,857,860,0],[711,745,764,840,0],[738,745,769,784,1],[750,767,770,780,0],[730,739,769,776,0],[732,738,741,748,0]];
const eurMa = [24,367,48,361,75,358,100,349,125,342,150,324,170,313,216,305,250,298,290,293,320,293,340,298,360,306,385,310,408,318,460,342,485,370,504,386,550,409,580,434,620,461,650,490,697,520,730,556,780,605,830,655,865,688,890,717,925,746,960,774,1000,794,1030,808,1045,813,1085,817,1110,823,1150,827,1170,829,1240,829,1290,826,1350,829,1410,832,1440,835,1490,828,1530,809,1560,790,1590,779,1615,775,1660,777,1710,771,1750,762,1780,758,1830,764,1860,778,1890,790,1922,799,1960,792,2010,785];
const gbpHead = [[165,195]];
const gbpBody = [[258,288],[262,288],[242,292],[238,276],[262,290],[280,300],[278,298],[264,311],[274,298],[198,294],[184,212],[178,202],[164,192],[162,184],[162,208],[204,262],[216,240],[218,250],[224,252],[222,250],[222,240],[226,240],[230,242],[232,256],[236,276],[256,284],[250,288],[248,286],[274,292],[270,288],[274,296],[250,300],[252,290],[272,305],[270,298],[272,294],[248,280],[248,288],[230,272],[228,258],[224,248],[228,252],[234,250],[216,248],[210,268],[222,268],[246,268],[254,276],[258,280],[260,390],[356,404],[374,434],[416,438],[424,442],[434,464],[450,520],[496,540],[510,546],[504,524],[500,522],[480,510],[488,532],[520,570],[542,630],[614,658],[636,662],[632,652],[628,684],[626,688],[644,710],[650,684],[674,692],[672,708],[652,722],[678,782],[736,788],[734,756],[722,760],[714,742],[648,718],[640,686],[646,690],[614,658],[632,656],[644,674],[636,680],[642,684],[682,720],[710,738],[694,730],[674,702],[662,710],[654,720],[654,726],[710,738],[708,726],[706,730],[688,740],[682,712],[678,740],[594,752],[600,628],[598,680],[662,698],[642,832],[786,860],[820,862],[812,838],[820,854],[826,905],[814,868],[822,886],[826,864],[842,882],[872,902],[878,918],[792,910],[804,886],[836,860],[846,870],[820,864],[816,830]];
const gbp = gbpHead.concat(Array(47).fill(null), gbpBody);
gbp[39] = [250,303]; gbp[43] = [250,296];
const gbpMa = [612,258,630,264,660,266,700,272,720,270,740,260,770,244,800,236,830,231,860,218,880,213,905,221,930,240,950,251,990,258,1020,267,1060,273,1110,264,1140,258,1160,254,1190,254,1210,264,1255,310,1290,374,1340,448,1380,512,1430,572,1475,618,1525,684,1550,696,1575,699,1620,694,1675,690,1715,676,1740,681,1765,692,1800,700,1830,688,1850,685,1885,717,1930,748,1965,780,1995,826,2020,847,2045,852,2065,850];
const chf = [[590,608],[584,606],[588,605],[586,627],[600,612],[590,610],[592,606],[590,608],[580,600],[566,594],[578,590],[574,592],[578,594],[574,590],[566,590],[576,590],[578,590],[576,588],[574,590],[576,590],[580,594],[554,600],[556,566],[546,566],[544,556],[522,552],[530,544],[524,548],[532,554],[534,548],[530,544],[532,546],[520,542],[526,544],[522,542],[518,532],[516,534],[518,530],[512,526],[504,544],[522,540],[520,546],[508,530],[506,526],[518,530],[524,554],[542,554],[542,552],[538,550],[528,554],[534,568],[548,566],[540,560],[532,546],[530,546],[534,548],[514,546],[516,530],[522,536],[518,534],[524,540],[520,538],[504,524],[464,508],[466,486],[470,480],[458,474],[468,478],[468,480],[470,478],[462,480],[464,484],[458,476],[454,470],[462,474],[454,472],[456,472],[444,460],[442,462],[446,462],[420,466],[422,456],[402,430],[404,414],[396,420],[412,438],[428,452],[426,450],[424,436],[420,434],[414,430],[416,452],[426,444],[384,434],[388,402],[392,406],[390,408],[384,398],[380,390],[358,388],[366,376],[372,384],[366,382],[354,376],[360,392],[366,388],[356,370],[360,376],[362,376],[350,366],[350,376],[346,380],[336,352],[330,348],[336,344],[314,342],[284,334],[286,304],[292,302],[290,306],[276,300],[274,302],[246,284],[250,288],[270,286],[272,290],[270,292],[278,302],[268,300],[262,308],[270,298],[250,300],[252,264],[256,282],[246,278],[230,252],[230,248],[232,244],[224,240],[224,240],[222,276],[222,270],[226,240],[224,240],[216,234],[212,230],[206,224],[188,232],[194,276],[260,274],[262,282],[226,270],[200,256],[160,210],[162,188],[182,194],[168,190],[168,206],[164,204],[166,180],[158,182],[146,240],[138,156],[122,150],[126,158],[108,140],[126,140],[128,138],[134,148],[140,148]];
const macd = [18,898,35,900,51,906,68,904,85,897,101,882,127,864,143,856,160,847,185,842,200,826,215,812,227,798,243,784,260,776,285,770,311,768,336,763,352,766,377,776,394,795,411,812,425,818,436,824,450,826,470,820,486,818,511,810,528,812,540,790,553,762,570,745,590,738,612,735,630,732,654,738,690,737,704,724,720,710,729,718,745,735,762,740,787,748,804,742,830,735,846,720,870,716,900,724,920,732,938,738,965,728,988,706,1005,690,1021,682,1038,664,1055,672,1072,684,1097,702,1115,712,1130,718,1155,708,1172,703,1185,706,1197,716,1215,719,1239,716,1250,724,1264,760,1276,774,1289,762,1300,745,1322,722,1350,712,1372,688,1390,684,1414,684,1431,696];
const signal = [18,862,35,884,52,896,75,902,95,898,120,886,145,867,170,854,200,846,225,828,250,808,275,785,310,771,345,766,380,766,400,774,430,797,455,814,480,821,510,819,535,811,560,795,585,768,610,744,630,735,690,735,720,728,750,724,775,724,795,736,825,739,860,731,890,722,930,722,955,730,985,724,1010,708,1035,692,1060,677,1085,677,1105,687,1130,700,1160,707,1210,708,1240,710,1265,722,1290,738,1320,746,1340,740,1365,720,1390,705,1415,692,1428,688];
const jpy = [[448,454,490,552,1],[482,490,518,566,1],[508,515,520,544,1],[446,484,520,522,0],[426,460,485,486,0],[458,461,497,518,1],[456,487,496,528,0],[420,433,487,494,0],[434,434,460,496,1],[420,431,460,472,0],[420,430,482,492,1],[462,473,482,534,0],[436,451,472,478,0],[372,397,451,490,0],[400,400,439,440,1],[404,416,460,460,0],[400,412,442,480,1],[440,443,488,514,1],[442,482,487,504,0],[470,482,535,556,1],[482,484,536,538,0],[474,487,547,578,1],[480,490,547,572,0],[478,490,518,536,1],[508,517,593,600,1],[552,556,593,616,0],[546,556,593,594,1],[545,553,593,628,0],[524,541,556,578,0],[492,505,542,564,0],[478,493,506,526,0],[432,469,493,512,0],[444,454,469,484,0],[402,406,455,464,0],[280,286,407,430,0],[154,160,286,290,0],[146,160,172,248,1],[120,154,172,200,0],[134,154,167,178,1],[154,170,200,204,1],[172,203,206,234,1],[196,206,257,296,1],[208,255,258,290,0],[220,256,304,344,1],[276,284,304,350,0],[236,260,298,316,0],[218,223,259,262,0],[212,224,262,278,1],[250,253,262,302,0],[222,247,254,276,0],[236,248,251,262,0],[240,250,278,284,1],[246,253,278,284,0],[232,251,254,264,0],[242,253,281,300,1],[244,248,281,302,0],[238,247,250,268,0],[244,250,257,262,0],[248,249,252,258,0],[242,249,262,274,1],[252,262,284,292,1],[252,268,284,292,0],[224,265,371,430,1],[318,373,376,380,0],[350,355,374,412,0],[284,301,353,356,0],[266,277,302,322,0],[202,217,278,284,0],[202,217,248,270,1],[200,211,248,256,0],[170,202,211,222,0],[182,201,214,218,1],[182,190,215,252,0],[188,190,218,246,1],[190,202,217,222,0],[152,169,212,216,0],[140,151,170,188,0],[108,127,151,154,0],[120,127,184,208,1],[162,181,233,256,1],[216,229,232,246,0],[197,238,263,276,1],[208,214,263,294,0],[200,211,214,222,0]];
const cci = [26,760,42,772,60,778,75,768,92,761,108,783,125,787,142,757,158,767,175,751,191,764,208,784,224,744,241,704,257,719,274,722,290,742,307,796,324,790,340,837,357,814,373,832,390,805,406,796,423,829,440,822,456,814,472,808,489,790,506,760,522,736,539,712,555,706,572,694,588,667,605,664,621,690,638,704,655,720,671,732,687,740,704,750,721,755,737,765,754,775,786,763,803,775,820,792,836,777,853,774,869,791,886,775,903,753,919,792,936,768,952,742,986,750,1002,773,1019,824,1035,795,1052,908,1068,870,1085,840,1101,792,1118,765,1134,725,1151,733,1184,715,1217,727,1234,737,1250,737,1300,707,1317,732,1333,778,1350,800,1366,814,1383,805,1400,778];

const shortSpan = ['20 Apr 2022','21 Apr 20:00','25 Apr 04:00','26 Apr 12:00','27 Apr 20:00','29 Apr 04:00','2 May 12:00','3 May 20:00','5 May 04:00','6 May 12:00','9 May 20:00'];
const longSpan = ['31 Mar 2022','4 Apr 20:00','7 Apr 12:00','12 Apr 04:00','14 Apr 20:00','19 Apr 12:00','22 Apr 04:00','26 Apr 20:00','29 Apr 12:00','4 May 04:00','6 May 20:00'];

const GRID = '#778899', LIME = '#00ff00', BOTTOM = 283, FIRST = 3;

function draw(id, o) {
  const svg = document.getElementById(id);
  const right = svg.clientWidth - 41;
  const Y = v => Math.round(v / 3) - o.off;
  const X = u => FIRST + (u - o.x0) / o.ux;
  const mainEnd = o.sub ? 189 : BOTTOM;
  const out = [];
  const rect = (x, y, w, h, f) => out.push(`<rect x="${x}" y="${y}" width="${w}" height="${h}" fill="${f}"/>`);
  const text = (x, y, s, f) => out.push(`<text x="${x}" y="${y}"${f ? ` fill="${f}"` : ''}>${s}</text>`);
  const box = (t, b) => out.push(`<rect x="2.500" y="${t + .5}" width="${right - 2}" height="${b - t}" fill="none" stroke="#fff"/>`);
  const dash = (d, c) => out.push(`<path d="${d}" stroke="${c}" stroke-dasharray="3 3" fill="none"/>`);
  const line = (p, c, extra = '') => {
    let s = '';
    for (let i = 0; i < p.length; i += 2) s += `${X(p[i]).toFixed(1)},${(p[i + 1] / 3 - o.off + .5).toFixed(1)} `;
    out.push(`<polyline points="${s}" fill="none" stroke="${c}" ${extra}/>`);
  };

  let g = '';
  for (let x = FIRST + 32; x < right; x += 32) {
    g += `M${x + .5} 3V${mainEnd}`;
    if (o.sub) g += `M${x + .5} 192V${BOTTOM}`;
  }
  o.prices.forEach((p, k) => { g += `M3 ${o.gridTop + 33 * k + .5}H${right}`; });
  if (o.sub) g += `M3 ${o.zero + .5}H${right}`;
  dash(g, GRID);
  rect(3, Y(o.now), right - 3, 1, GRID);

  if (o.candles) o.candles.forEach(([h, t, b, l, full], i) => {
    const x = FIRST + 8 * i;
    rect(x, Y(h), 1, Y(l) - Y(h) + 1, LIME);
    const bh = Math.max(1, Y(b) - Y(t) + 1);
    const left = Math.max(3, x - 2);
    rect(left, Y(t), x + 3 - left, bh, LIME);
    if (bh > 2) rect(Math.max(3, x - 1), Y(t) + 1, i ? 3 : 2, bh - 2, full ? '#fff' : '#000');
  });
  if (o.bars) {
    let prev = null;
    o.bars.forEach((b, i) => {
      if (!b) { prev = null; return; }
      const n = o.bars[i + 1] || b, x = FIRST + 4 * i;
      const close = (Math.max(b[0], n[0]) + Math.min(b[1], n[1])) / 2;
      rect(x, Y(b[0]), 1, Y(b[1]) - Y(b[0]) + 1, LIME);
      if (prev !== null && i) rect(x - 1, Y(prev), 1, 1, LIME);
      rect(x + 1, Y(close), 1, 1, LIME);
      prev = close;
    });
  }
  if (o.ma) line(o.ma, '#ff0000');

  if (o.macd) {
    let k = 0;
    for (let i = 0; i < o.bars.length; i++) {
      const u = o.x0 + 4 * i * o.ux;
      while (k < macd.length - 4 && macd[k + 2] < u) k += 2;
      const f = Math.min(1, (u - macd[k]) / (macd[k + 2] - macd[k]));
      const y = Y(macd[k + 1] + f * (macd[k + 3] - macd[k + 1]));
      rect(FIRST + 4 * i, Math.min(y, o.zero), 1, Math.abs(y - o.zero) + 1, '#c0c0c0');
    }
    line(signal, '#ff0000', 'stroke-dasharray="3 1"');
  }
  if (o.cci) {
    dash(`M3 ${Y(724) + .5}H${right}M3 ${Y(808) + .5}H${right}`, '#c0c0c0');
    line(cci, '#20b2aa');
  }

  box(2, mainEnd);
  if (o.sub) box(191, BOTTOM);
  o.prices.forEach((p, k) => {
    const y = o.gridTop + 33 * k;
    rect(right + 1, y, 3, 1, '#fff');
    if (p) text(right + 6, y + 4, p);
  });
  (o.subLabels || []).forEach(([v, s]) => text(right + 4, Y(v) + 4, s));
  rect(right + 3, Y(o.now) - 5, 38, 11, '#fff');
  text(right + 6, Y(o.now) + 4, o.nowText, '#000');
  o.dates.forEach((d, k) => {
    rect(FIRST + 64 * k, BOTTOM, 1, 4, '#fff');
    text(1 + 64 * k, 296, d);
  });
  out.push('<path d="M6 14 9.500 10 13 14Z" fill="#fff"/>');
  text(17, 14, o.title);
  if (o.sub) text(6, 204, o.sub);
  svg.setAttribute('shape-rendering', 'crispEdges');
  svg.innerHTML = out.join('');
}

function drawAll() {
  draw('eurusd', { off: 29, x0: 24, ux: 3, gridTop: 16, candles: eur, ma: eurMa, now: 739, nowText: '1.05749', dates: shortSpan, title: 'EURUSD,H4&#160;&#160; 1.05750 1.05786 1.05729 1.05749', prices: ['1.09365','1.08765','1.08180','1.07580','1.06995','1.06395','','1.05210','1.04625'] });
  draw('gbpusd', { off: 29, x0: 36, ux: 3, gridTop: 16, bars: gbp, ma: gbpMa, now: 826, nowText: '1.23655', dates: longSpan, title: 'GBPUSD,H4&#160;&#160; 1.23649 1.23747 1.23622 1.23655', prices: ['1.31785','1.30595','1.29440','1.28285','1.27130','1.25940','1.24785','','1.22475'] });
  draw('usdchf', { off: 24, x0: 18, ux: 2.09, gridTop: 21, bars: chf, macd: true, sub: 'MACD(12,26,9) 0.00403 0.00425', zero: 251, now: 143, nowText: '0.99159', dates: longSpan, title: 'USDCHF,H4&#160;&#160; 0.99159 0.99177 0.99133 0.99159', prices: ['','0.97790','0.96310','0.94830','0.93350','0.91870'], subLabels: [[667,'0.00542'],[827,'0.00'],[899,'-0.00294']] });
  draw('usdjpy', { off: 24, x0: 26, ux: 2.069, gridTop: 21, candles: jpy, cci: true, sub: 'CCI(14) -28.8749', zero: 231, now: 211, nowText: '130.460', dates: shortSpan, title: 'USDJPY,H4&#160;&#160; 130.456 130.542 130.392 130.460', prices: ['131.120','130.270','129.420','128.570','127.720','126.895'], subLabels: [[667,'277.3354'],[724,'100'],[766,'0.00'],[808,'-100'],[899,'-369.8577']] });
}
drawAll();
window.addEventListener('resize', drawAll);
```
